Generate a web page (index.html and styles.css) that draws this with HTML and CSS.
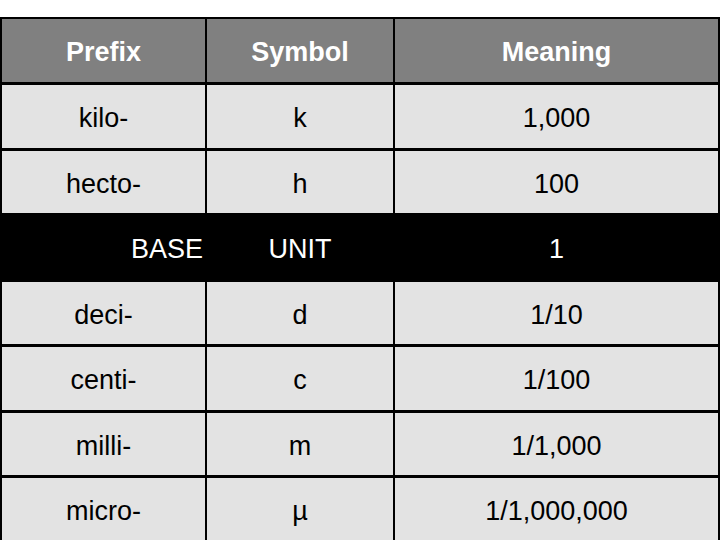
FILE: index.html
```html
<!DOCTYPE html>
<html>
<head>
<meta charset="utf-8">
<link rel="stylesheet" href="styles.css">
</head>
<body>
<div class="page">
  <div class="table">
    <div class="cell head">Prefix</div>
    <div class="cell head">Symbol</div>
    <div class="cell head">Meaning</div>

    <div class="cell">kilo-</div>
    <div class="cell">k</div>
    <div class="cell">1,000</div>

    <div class="cell">hecto-</div>
    <div class="cell">h</div>
    <div class="cell">100</div>

    <div class="base">
      <div class="bcell right">BASE</div>
      <div class="bcell">UNIT</div>
      <div class="bcell">1</div>
    </div>

    <div class="cell">deci-</div>
    <div class="cell">d</div>
    <div class="cell">1/10</div>

    <div class="cell">centi-</div>
    <div class="cell">c</div>
    <div class="cell">1/100</div>

    <div class="cell">milli-</div>
    <div class="cell">m</div>
    <div class="cell">1/1,000</div>

    <div class="cell">micro-</div>
    <div class="cell">µ</div>
    <div class="cell">1/1,000,000</div>
  </div>
</div>
</body>
</html>
```

FILE: styles.css
```css
html, body {
  margin: 0;
  padding: 0;
  background: #ffffff;
}
body {
  width: 720px;
  height: 540px;
  overflow: hidden;
  font-family: "Liberation Sans", Arial, sans-serif;
}
.page {
  padding-top: 17px;
}
.table {
  display: grid;
  grid-template-columns: 203px 186px 323px;
  grid-template-rows: 63px 63px 62px 63px 62px 63px 62px 63px;
  column-gap: 2px;
  row-gap: 3px;
  padding: 2px;
  background: #000000;
  width: 716px;
}
.cell {
  background: #e3e3e3;
  color: #000000;
  font-size: 27px;
  display: flex;
  align-items: center;
  justify-content: center;
  padding-top: 4px;
  box-sizing: border-box;
}
.cell.head {
  background: #808080;
  color: #ffffff;
  font-weight: bold;
  font-size: 27px;
}
.base {
  grid-column: 1 / -1;
  display: grid;
  grid-template-columns: 203px 186px 323px;
  column-gap: 2px;
  background: #000000;
  margin: -1px 0;
}
.bcell {
  color: #ffffff;
  font-size: 27px;
  display: flex;
  align-items: center;
  justify-content: center;
  padding-top: 4px;
}
.bcell.right {
  justify-content: flex-end;
  padding-right: 2px;
}
```
